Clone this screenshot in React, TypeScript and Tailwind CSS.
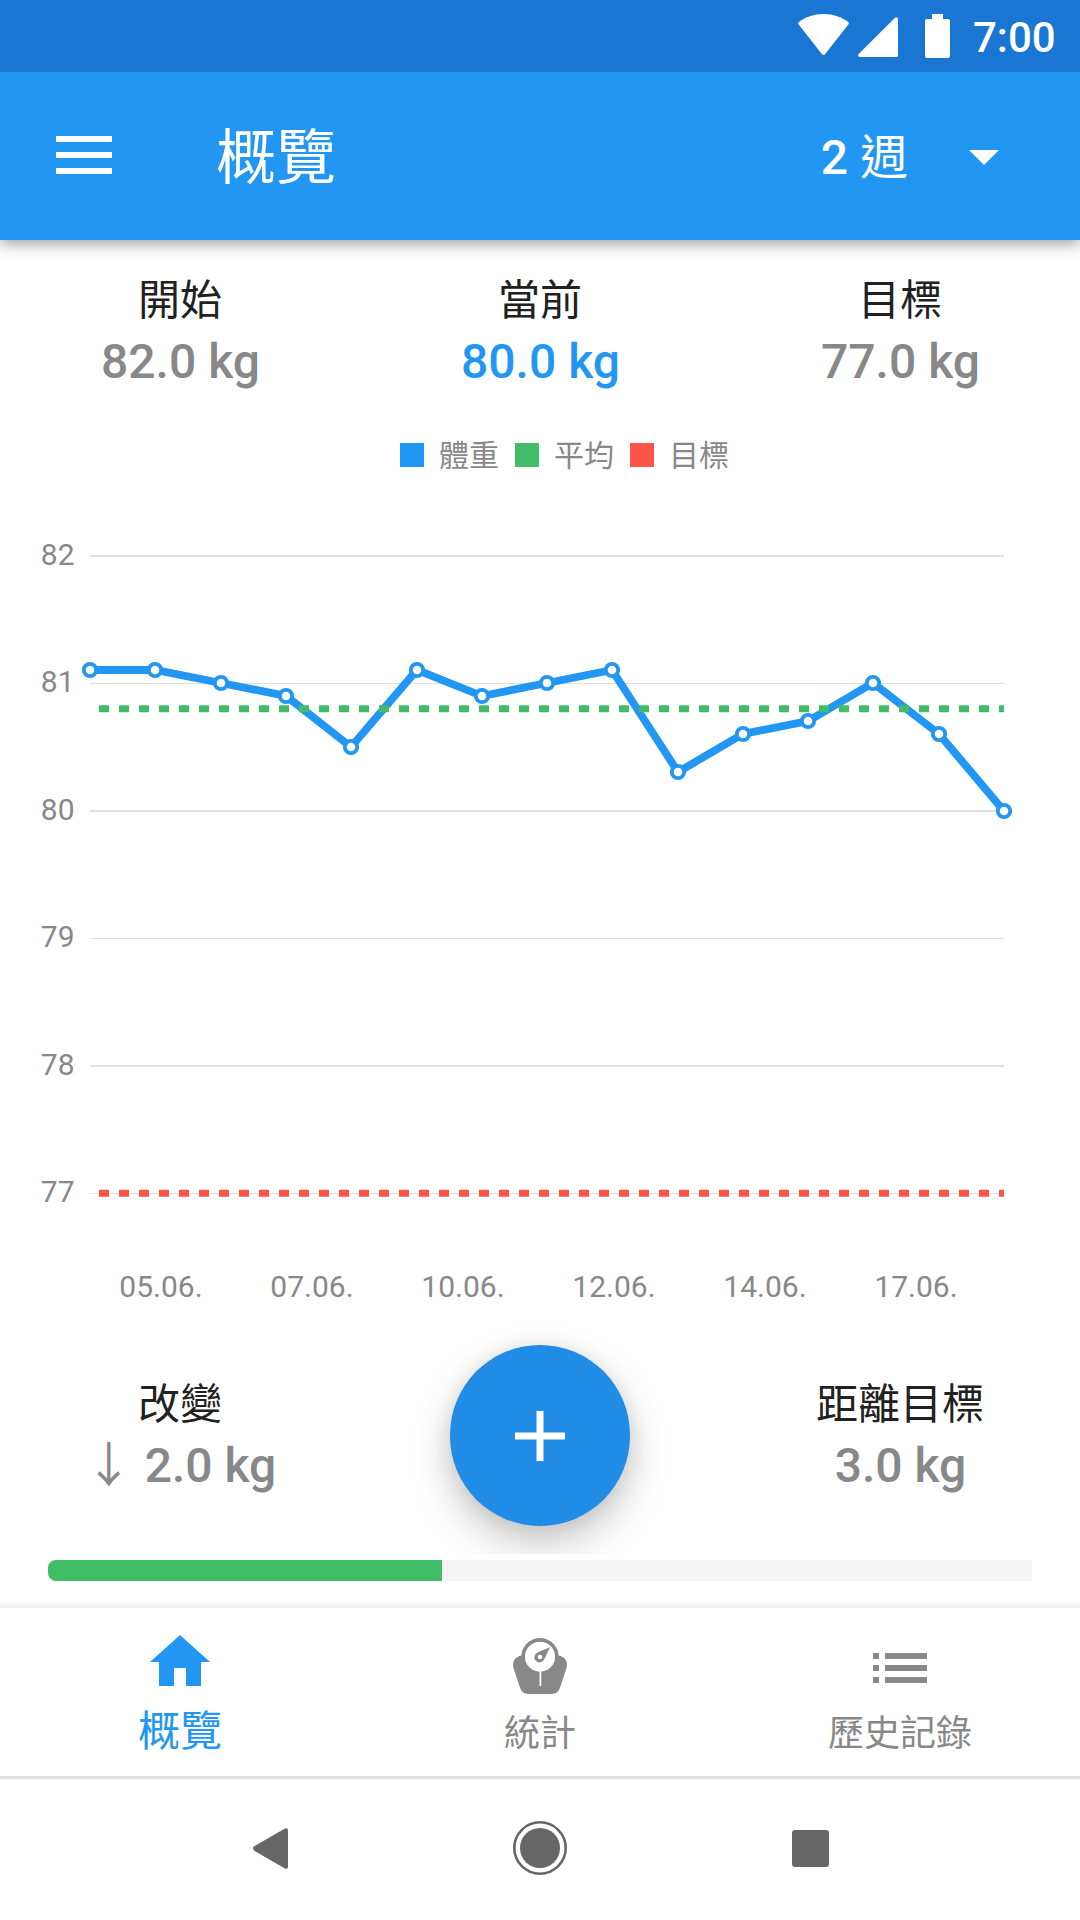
import React from "react";

const weights = [81.1, 81.1, 81.0, 80.9, 80.5, 81.1, 80.9, 81.0, 81.1, 80.3, 80.6, 80.7, 81.0, 80.6, 80.0];
const average = 80.8;
const target = 77;
const ticks = [82, 81, 80, 79, 78, 77];
const dates = ["05.06.", "07.06.", "10.06.", "12.06.", "14.06.", "17.06."];

const LEFT = 90;
const RIGHT = 1004;
const toX = (i: number) => Math.round(90.13 + (i * (RIGHT - 90.13)) / (weights.length - 1));
const toY = (kg: number) => Math.round(88.5 + (82 - kg) * 127.5);

function StatusBar() {
  return (
    <div className="relative z-20 flex h-[72px] items-start bg-[#1976d2] pl-[798px] text-white">
      <svg className="mt-3.5 h-[42px] w-[51px]" viewBox="0 0 51 42" fill="currentColor">
        <path d="M.6 8.2C7.5 3 16 0 25.5 0S43.5 3 50.4 8.2q.9.9.1 2.1L27.2 40q-1.7 2-3.4 0L.5 10.3Q-.3 9.1.6 8.2z" />
      </svg>
      <svg className="mt-[17px] ml-[9px] h-10 w-10" viewBox="0 0 40 40" fill="currentColor">
        <path d="M37 .7q3-1.7 3 1.8V38.5q0 1.5-1.5 1.5H1.8Q-1 40 .7 37z" />
      </svg>
      <svg className="mt-3.5 ml-[27px] h-11 w-[25px]" viewBox="0 0 25 44" fill="currentColor">
        <path d="M7 0h11v5h5q2 0 2 2v35q0 2-2 2H2q-2 0-2-2V7q0-2 2-2h5z" />
      </svg>
      <span className="ml-[23px] text-[42px] leading-[75px] font-medium">7:00</span>
    </div>
  );
}

function AppBar() {
  return (
    <header className="relative z-10 flex h-[168px] items-center bg-[#2196f3] pl-14 text-white shadow-[0_4px_14px_rgba(0,0,0,0.38)]">
      <div className="mb-0.5 flex w-14 flex-col gap-2.5">
        <i className="h-1.5 bg-white" />
        <i className="h-1.5 bg-white" />
        <i className="h-1.5 bg-white" />
      </div>
      <h1 className="mt-1.5 ml-[104px] text-[60px] leading-[72px]">概覽</h1>
      <div className="ml-auto flex items-center pr-[81px]">
        <span className="mt-1 text-[48px] leading-[64px]">
          <span className="font-medium">2 </span>週
        </span>
        <svg className="mt-[3px] ml-[61px] h-[15px] w-[30px]" viewBox="0 0 30 15" fill="currentColor">
          <path d="M0 0h30L15 15z" />
        </svg>
      </div>
    </header>
  );
}

function Stat({ label, value, down, active }: { label: string; value: string; down?: boolean; active?: boolean }) {
  return (
    <div className="text-center">
      <div className="text-[42px] leading-[56px] text-[#212121]">{label}</div>
      <div className={active ? "pl-px text-[48px] leading-[66px] text-[#2196f3]" : "pl-px text-[48px] leading-[66px] text-[#888888]"}>
        {down && "↓"}
        <span className="font-medium">{down && " "}{value}</span>
      </div>
    </div>
  );
}

function LegendItem({ color, label }: { color: string; label: string }) {
  return (
    <div className="flex h-6 items-center gap-[15px]">
      <i className={`size-6 ${color}`} />
      <span className="mt-0.5 text-[30px] leading-6 text-[#888888]">{label}</span>
    </div>
  );
}

function Chart() {
  const line = weights.map((w, i) => `${toX(i)},${toY(w)}`).join(" ");
  return (
    <svg className="block h-[837px] w-[1080px] shrink-0" viewBox="0 0 1080 837">
      {ticks.map((t, i) => (
        <g key={t}>
          <rect x={LEFT} y={i % 2 ? toY(t) : toY(t) - 1} width={RIGHT - LEFT} height={i % 2 ? 1 : 2} fill="#e0e0e0" />
          <text x="74.5" y={toY(t) + 9} textAnchor="end" fontSize="30" fill="#888888">{t}</text>
        </g>
      ))}
      {dates.map((d, i) => (
        <text key={d} x={161 + i * 151} y="830" textAnchor="middle" fontSize="30" fill="#888888">{d}</text>
      ))}
      <polyline points={line} fill="none" stroke="#2196f3" strokeWidth="7.8" />
      <line x1="99" x2={RIGHT} y1={toY(average) - 0.3} y2={toY(average) - 0.3} stroke="#41bc67" strokeWidth="7" strokeDasharray="10 10" />
      <line x1="99" x2={RIGHT} y1={toY(target) + 0.3} y2={toY(target) + 0.3} stroke="#ff5449" strokeWidth="7" strokeDasharray="10 10" />
      {weights.map((w, i) => (
        <circle key={i} cx={toX(i)} cy={toY(w)} r="6.2" fill="#fff" stroke="#2196f3" strokeWidth="3.8" />
      ))}
    </svg>
  );
}

function ScaleIcon() {
  return (
    <svg className="mt-6 size-[72px]" viewBox="0 0 72 72">
      <path d="M17.5 23.6C11.5 24.5 8 29.5 9.3 35.500l7 20.800Q18.300 62 24 62h24q5.700 0 7.700-5.700l7-20.800c1.300-6-2.200-11-8.200-11.900z" fill="#888888" />
      <circle cx="36" cy="24.700" r="18.700" fill="#888888" />
      <circle cx="36" cy="24.700" r="15" fill="#fff" />
      <path d="M46 15.300 40.300 27.300A5.200 5.200 0 1 1 33.800 20.300z" fill="#888888" />
      <circle cx="36" cy="25" r="2.300" fill="#fff" />
      <path d="M35.500 38h1.800v16h-1.800z" fill="#fff" />
    </svg>
  );
}

function BottomNav() {
  return (
    <nav className="grid h-[171px] grid-cols-3 border-b-[3px] border-[#dfdfdf] text-[#888888]">
      <div className="flex flex-col items-center text-[#2196f3]">
        <svg className="mt-[18px] size-[72px]" viewBox="0 0 24 24" fill="currentColor">
          <path d="M10 20v-6h4v6h5v-8h3L12 3 2 12h3v8z" />
        </svg>
        <span className="text-[42px] leading-[67px]">概覽</span>
      </div>
      <div className="flex flex-col items-center">
        <ScaleIcon />
        <span className="text-[36px] leading-[60px]">統計</span>
      </div>
      <div className="flex flex-col items-center">
        <svg className="mt-6 size-[72px]" viewBox="0 0 24 24" fill="currentColor">
          <path d="M3 13h2v-2H3v2zm0 4h2v-2H3v2zm0-8h2V7H3v2zm4 4h14v-2H7v2zm0 4h14v-2H7v2zM7 7v2h14V7H7z" />
        </svg>
        <span className="text-[36px] leading-[60px]">歷史記錄</span>
      </div>
    </nav>
  );
}

function SystemNav() {
  return (
    <div className="flex h-[141px] items-center justify-between pr-[251px] pb-[3px] pl-[253px] text-[#666666]">
      <svg className="h-[41px] w-[35px]" viewBox="0 0 35 41" fill="currentColor">
        <path d="M31.5.7Q35-1 35 2.5v36q0 3.500-3.500 1.800L1.200 22.700q-2.200-2.200 0-4.400z" />
      </svg>
      <svg className="size-[54px]" viewBox="0 0 54 54">
        <circle cx="27" cy="27" r="25.7" fill="none" stroke="currentColor" strokeWidth="2.6" />
        <circle cx="27" cy="27" r="20" fill="currentColor" />
      </svg>
      <i className="size-[37px] rounded-[3px] bg-[#666666]" />
    </div>
  );
}

export default function App() {
  return (
    <div
      lang="zh-TW"
      className="flex h-[1920px] w-[1080px] flex-col overflow-hidden bg-white font-['Roboto','Noto_Sans_CJK_TC',sans-serif]"
    >
      <StatusBar />
      <AppBar />
      <section className="grid grid-cols-3 pt-[33px]">
        <Stat label="開始" value="82.0 kg" />
        <Stat label="當前" value="80.0 kg" active />
        <Stat label="目標" value="77.0 kg" />
      </section>
      <div className="mt-12 flex gap-4 pl-[400px]">
        <LegendItem color="bg-[#2196f3]" label="體重" />
        <LegendItem color="bg-[#41bc67]" label="平均" />
        <LegendItem color="bg-[#ff5449]" label="目標" />
      </div>
      <Chart />
      <section className="relative grid h-[250px] shrink-0 grid-cols-3 overflow-hidden pt-[73px]">
        <Stat label="改變" value="2.0 kg" down />
        <div />
        <Stat label="距離目標" value="3.0 kg" />
        <button className="absolute top-[41px] left-[450px] flex h-[181px] w-[180px] items-center justify-center rounded-full bg-[#208ce5] shadow-[0_18px_40px_rgba(0,0,0,0.22),0_0_20px_rgba(0,0,0,0.08)]">
          <svg className="size-[50px]" viewBox="0 0 50 50" stroke="#fff" strokeWidth="7">
            <path d="M25 0v50M0 25h50" />
          </svg>
        </button>
      </section>
      <div className="mx-12 mt-1.5 h-[21px] shrink-0 overflow-hidden rounded-l-[8px] bg-[#f4f4f4]">
        <div className="h-full w-[394px] bg-[#41bc67]" />
      </div>
      <div className="mt-5 h-[7px] shrink-0 bg-linear-to-b from-white to-[#eeeeee]" />
      <BottomNav />
      <SystemNav />
    </div>
  );
}
